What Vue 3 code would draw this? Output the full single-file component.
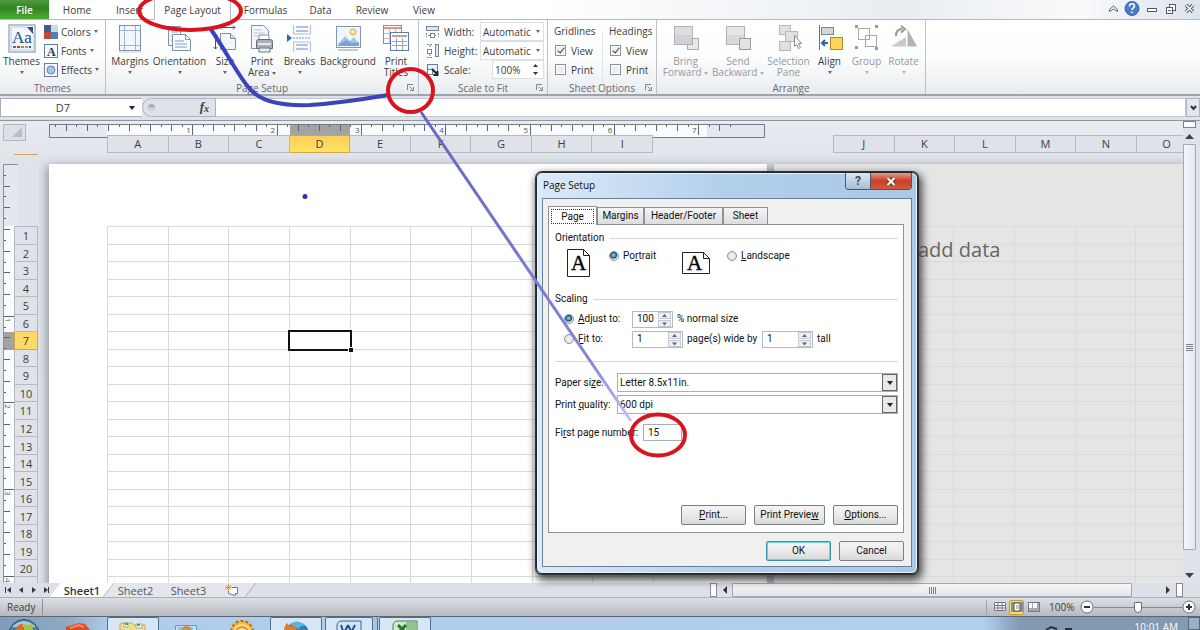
<script setup>
import { ref } from 'vue'

const tabs = ['Home', 'Insert', 'Page Layout', 'Formulas', 'Data', 'Review', 'View']
const pages = [
  { id: 'first', columns: ['A', 'B', 'C', 'D', 'E', 'F', 'G', 'H', 'I'], selected: 'D' },
  { id: 'second', columns: ['J', 'K', 'L', 'M', 'N', 'O', 'P', 'Q', 'R'], selected: '' },
]
const rows = Array.from({ length: 21 }, (_, i) => i + 1)

// Ruler ticks: eighths of an inch, longer on the quarters.
const inch = 84.3
const topTicks = Array.from({ length: 65 }, (_, i) => i - 5).map((n) => ({
  n, x: 59 + (n * inch) / 8, len: n > 0 && n % 8 === 0 ? 10 : n % 2 === 0 ? 6 : 2,
})).filter((t) => t.x > 2 && t.x < 714)
const vInch = 86.7
const sideTicks = Array.from({ length: 40 }, (_, i) => i - 5).map((n) => ({
  n, y: 65 + (n * vInch) / 8, len: n > 0 && n % 8 === 0 ? 10 : n % 2 === 0 ? 6 : 2,
}))

const adjust = ref('100')
const wide = ref('1')
const tall = ref('1')
const firstPage = ref('15')
</script>

<template>
  <div class="window">
    <nav class="tabs" aria-label="Ribbon tabs">
      <button class="file">File</button>
      <button v-for="t in tabs" :key="t" :class="{ active: t === 'Page Layout' }">{{ t }}</button>
      <div class="win-tools">
        <svg width="86" height="16" viewBox="0 0 86 16" fill="none" stroke="#555b66">
          <path d="M1.500 9.500 5.500 6l4 3.500v2l-4-2.500-4 2.500z" stroke-width="1" fill="#fff" />
          <circle cx="24" cy="8.500" r="7" fill="#4a7cc8" stroke="#3a64a8" />
          <path d="M21.500 6.500c0-3.500 5-3.500 5-.5 0 2-2.500 1.700-2.500 4M24 11.500v1.500" stroke="#fff" stroke-width="1.600" />
          <rect x="39.500" y="8.500" width="9" height="3" fill="#fff" />
          <rect x="61.500" y="4.500" width="6" height="6" fill="#fff" />
          <rect x="58.500" y="7.500" width="6" height="6" fill="#fff" />
          <path d="M60 10.500h3" />
          <path d="m78 5 7 7m0-7-7 7" stroke-width="3.500" /><path d="m78 5 7 7m0-7-7 7" stroke="#fff" stroke-width="1.500" />
        </svg>
      </div>
    </nav>

    <section class="ribbon">
      <div class="group themes">
        <div class="body">
          <button class="big">
            <svg width="28" height="30" viewBox="0 0 28 30">
              <rect x="1" y="1" width="26" height="27" fill="#fff" stroke="#6d89ac" /><path d="M3 3h17l6 6v17H3z" fill="#f2f7fc" stroke="#b6c8de" />
              <path d="M19 3h6v7z" fill="#2c4f85" />
              <text x="4" y="19" font-family="Liberation Serif" font-size="17" fill="#1f4e79">Aa</text>
              <path d="M5 23h3" stroke="#3b6fb6" stroke-width="2" /><path d="M9 23h3" stroke="#c0392b" stroke-width="2" /><path d="M13 23h3" stroke="#7aa536" stroke-width="2" /><path d="M17 23h3" stroke="#e08a2b" stroke-width="2" /><path d="M21 23h2" stroke="#30599c" stroke-width="2" />
            </svg>
            <span>Themes</span><i class="caret"></i>
          </button>
          <div class="small-col">
            <button><svg width="14" height="14"><rect width="7" height="7" fill="#405f8d" /><rect x="7" width="7" height="7" fill="#c9dbe8" /><rect y="7" width="7" height="7" fill="#b94a43" /><rect x="7" y="7" width="7" height="7" fill="#4c80b7" /></svg>Colors<i class="caret"></i></button>
            <button><svg width="14" height="14"><rect x=".5" y=".5" width="13" height="13" fill="#f4f8fc" stroke="#6d7f98" /><text x="3" y="12" font-family="Liberation Serif" font-size="12" font-weight="bold" fill="#223a5e">A</text></svg>Fonts<i class="caret"></i></button>
            <button><svg width="14" height="14"><rect x=".5" y=".5" width="13" height="13" fill="#f4f8fc" stroke="#6d7f98" /><circle cx="7" cy="7" r="4" fill="#a9c4ec" stroke="#5e83bd" /></svg>Effects<i class="caret"></i></button>
          </div>
        </div>
        <h2>Themes</h2>
      </div>

      <div class="group setup">
        <div class="body">
          <button class="big">
            <svg width="28" height="30"><rect x="3.500" y="1.500" width="21" height="25" fill="#f3f7fb" stroke="#7c91ab" /><path d="M8.500 2v24M19.500 2v24M4 6.500h20M4 21.500h20" stroke="#9fb6d2" /><path d="M3 28h23" stroke="#ccd3dc" /></svg>
            <span>Margins</span><i class="caret"></i>
          </button>
          <button class="big">
            <svg width="28" height="30"><path d="M2.500 2.500h12v19h-12z" fill="#f3f7fb" stroke="#7c91ab" /><path d="M5 8h7M5 12h7M5 16h5" stroke="#8fa9ca" /><path d="M6.500 10.500h13l5 5v11h-18z" fill="#fbfdff" stroke="#7c91ab" /><path d="M19.500 10.500v5h5M9 17h9M9 20h12M9 23h12" fill="none" stroke="#7d9cc5" /></svg>
            <span>Orientation</span><i class="caret"></i>
          </button>
          <button class="big">
            <svg width="28" height="30"><path d="M9.500 9.500h10l5 5v11h-15z" fill="#f3f7fb" stroke="#7c91ab" /><path d="M19.500 9.500v5h5" fill="#c9daee" stroke="#7c91ab" /><path d="M9 3.500h15M11 1.500l-2 2 2 2M22 1.500l2 2-2 2M4.500 10v15M2.500 12l2-2 2 2M2.500 23l2 2 2-2" fill="none" stroke="#315c99" /></svg>
            <span>Size</span><i class="caret"></i>
          </button>
          <button class="big">
            <svg width="28" height="30"><path d="M3.500 1.500h12l5 5v18h-17z" fill="#f3f7fb" stroke="#7c91ab" /><path d="M6 6h8M6 9h11M6 12h5" stroke="#b6c7dc" /><path d="M11 11h10v7H11z" fill="#fff" stroke="#8a929c" /><path d="M8.500 17.500q0-2 2-2h12q2 0 2 2v7h-16z" fill="#a8afb7" stroke="#646b75" /><path d="M10 20h13" stroke="#e8ebee" stroke-width="2" /><path d="M11 24h11v4H11z" fill="#e6eefb" stroke="#6d7785" /></svg>
            <span>Print<br>Area <i class="caret"></i></span>
          </button>
          <button class="big">
            <svg width="28" height="30"><path d="M7.500 1v9h17V1M7.500 28v-10h17v10" fill="#f6f9fd" stroke="#b4bfcc" /><path d="M10 3h12M10 7h12M10 21h12M10 25h12" stroke="#6f8db6" /><path d="M7 14h18" stroke="#7a8aa0" stroke-dasharray="2 1" /><path d="m1 10 5 4-5 4z" fill="#2f66b0" /></svg>
            <span>Breaks</span><i class="caret"></i>
          </button>
          <button class="big">
            <svg width="28" height="30"><rect x="2.500" y="2.500" width="24" height="21" fill="#f1f6fc" stroke="#8196b2" /><circle cx="19" cy="8" r="3" fill="#fde6aa" stroke="#e0a54a" /><path d="m4 20 7-8 5 5 4-4 5 7v2H4z" fill="#a5c3e8" /><path d="m4 21 8-5 6 3 7-1v4H4z" fill="#7ba2d8" /><path d="M4 26h20" stroke="#c3cad3" stroke-width="2" /></svg>
            <span>Background</span>
          </button>
          <button class="big">
            <svg width="28" height="30"><rect x="1.500" y="1.500" width="18" height="18" fill="#f6f9fd" stroke="#7c91ab" /><path d="M2 4h17" stroke="#e1987e" stroke-width="2" /><path d="M2 9.500h17M2 14.500h17M7.500 5v14M13.500 5v14" stroke="#b4c3d8" /><rect x="8.500" y="8.500" width="18" height="18" fill="#fff" stroke="#5e7ba5" /><path d="M10 12h15" stroke="#e1987e" stroke-width="2" /><path d="M10 17.500h15M10 21.500h15M14.500 14v12M20.500 14v12" stroke="#8fa9cc" /></svg>
            <span>Print<br>Titles</span>
          </button>
        </div>
        <h2>Page Setup</h2>
        <button class="launch" aria-label="Page Setup options"><svg width="7" height="7" fill="none" stroke="#7d838c"><path d="M.5 6V.5H6M2.500 2.500l3 3M6.500 3v3.500H3" /></svg></button>
      </div>

      <div class="group scale">
        <div class="body fields">
          <label for="w"><svg width="14" height="14" fill="none" stroke="#7a8798"><rect x=".5" y="1.500" width="12" height="4" fill="#dce6f2" /><path d="M.5 8v4M12.500 8v4M2 10.500h9" stroke-dasharray="2 1" /><rect x="4.500" y="8.500" width="4" height="4" fill="#fff" /></svg>Width:</label>
          <span class="sel"><select id="w"><option>Automatic</option></select><i class="caret"></i></span>
          <label for="h"><svg width="14" height="14" fill="none" stroke="#7a8798"><rect x="9.500" y=".5" width="3" height="12" fill="#dce6f2" /><path d="M1 .5h6M1 13.500h6M4 1v3M4 10v3" stroke-dasharray="2 1" /><rect x="1.500" y="5.500" width="4" height="4" fill="#fff" /></svg>Height:</label>
          <span class="sel"><select id="h"><option>Automatic</option></select><i class="caret"></i></span>
          <label for="s"><svg width="14" height="14" fill="none" stroke="#6c7c92"><rect x="1.500" y="1.500" width="10" height="10" fill="#e8eff7" /><rect x="1.500" y="6.500" width="5" height="5" fill="#fff" /><path d="m6 6 5 5M11.500 8v4h-4" stroke="#1e2a3c" stroke-width="2" /></svg>Scale:</label>
          <span class="scale-spin"><input id="s" value="100%"><svg width="7" height="13" fill="#333"><path d="m1 4 2.500-3L6 4zM1 9l2.500 3L6 9z" /></svg></span>
        </div>
        <h2>Scale to Fit</h2>
        <button class="launch" aria-label="Scale options"><svg width="7" height="7" fill="none" stroke="#7d838c"><path d="M.5 6V.5H6M2.500 2.500l3 3M6.500 3v3.500H3" /></svg></button>
      </div>

      <div class="group options">
        <div class="body">
          <fieldset v-for="name in ['Gridlines', 'Headings']" :key="name">
            <legend>{{ name }}</legend>
            <label><input type="checkbox" checked>View</label>
            <label><input type="checkbox">Print</label>
          </fieldset>
        </div>
        <h2>Sheet Options</h2>
        <button class="launch" aria-label="Sheet options"><svg width="7" height="7" fill="none" stroke="#7d838c"><path d="M.5 6V.5H6M2.500 2.500l3 3M6.500 3v3.500H3" /></svg></button>
      </div>

      <div class="group arrange">
        <div class="body">
          <button class="big off">
            <svg width="28" height="30"><rect x="2.500" y="2.500" width="18" height="18" fill="#dedde0" stroke="#b2b2b6" /><path d="M3 11h17v9H3z" fill="#d2d1d5" /><path d="M20.500 14.500h6v11h-11v-5h5z" fill="#e9e9eb" stroke="#a9a9ad" /></svg>
            <span>Bring<br>Forward <i class="caret"></i></span>
          </button>
          <button class="big off">
            <svg width="28" height="30"><rect x="2.500" y="2.500" width="18" height="18" fill="#e6e5e8" stroke="#b2b2b6" /><path d="M3 11h17v9H3z" fill="#d9d8dc" /><rect x="15.500" y="14.500" width="11" height="11" fill="#e3e2e5" stroke="#9b9ba0" /></svg>
            <span>Send<br>Backward <i class="caret"></i></span>
          </button>
          <button class="big off">
            <svg width="28" height="30"><g fill="#e0dfe2" stroke="#b8b8bc"><rect x="4.500" y="1.500" width="11" height="9" /><rect x="4.500" y="17.500" width="11" height="9" /><rect x="10.500" y="7.500" width="12" height="10" /></g><path d="m19.500 11.500 7 8h-3l2 4-2 1-2-4-2 2z" fill="#fff" stroke="#8c8c91" /></svg>
            <span>Selection<br>Pane</span>
          </button>
          <button class="big">
            <svg width="28" height="30"><path d="M3.500 1v25" stroke="#4879b8" /><rect x="5.500" y="3.500" width="12" height="7" fill="#d3d7dc" stroke="#7b8290" /><rect x="14.500" y="13.500" width="12" height="12" fill="#fbd75c" stroke="#b08a2a" /><path d="M12 19H7M9 16l-3 3 3 3" fill="none" stroke="#2f66b0" stroke-width="2" /></svg>
            <span>Align</span><i class="caret"></i>
          </button>
          <button class="big off">
            <svg width="28" height="30"><g fill="none" stroke="#a9a9ad"><rect x="5.500" y="4.500" width="11" height="11" /><rect x="12.500" y="11.500" width="11" height="11" /></g><path d="M2 1h3v3H2zM22 1h3v3h-3zM2 22h3v3H2zM22 23h3v3h-3z" fill="#9a9a9e" /></svg>
            <span>Group</span><i class="caret"></i>
          </button>
          <button class="big off">
            <svg width="28" height="30"><path d="M1 22.500 16 13v9.500z" fill="#c9c9cc" /><path d="M17.500 5 27 22.500h-9.500z" fill="#b3b3b7" /><path d="M6 12Q6 5 12 5M11 2l4 3-4 3.500" fill="none" stroke="#98989c" stroke-width="2" /></svg>
            <span>Rotate</span><i class="caret"></i>
          </button>
        </div>
        <h2>Arrange</h2>
      </div>
    </section>

    <section class="formula">
      <label class="name-box"><input value="D7" aria-label="Name box"><i class="caret dark"></i></label>
      <div class="fx"><svg width="9" height="9"><circle cx="4.500" cy="4.500" r="4" fill="#cfd3d8" /><path d="M1 4.500a3.500 3.500 0 0 1 7 0z" fill="#aab0b8" /></svg><button><em>f</em><sub>x</sub></button></div>
      <input class="formula-input" aria-label="Formula bar">
      <button class="expand" aria-label="Expand formula bar"><svg width="7" height="6" fill="none" stroke="#333" stroke-width="2"><path d="m1 1 2.500 3L6 1" /></svg></button>
    </section>

    <main class="workspace">
      <aside class="side">
        <div class="corner-area"><button class="corner" aria-label="Select all"><svg width="11" height="11"><path d="M10 0v10H0z" fill="#b9bdc3" /></svg></button></div>
        <div class="side-body">
          <svg class="side-ruler" width="15" height="430">
            <rect x="0" y="0" width="15" height="62" fill="#e4e8ee" /><rect y="62" width="11" height="368" fill="#fafbfc" />
            <rect y="168" width="11" height="18" fill="#a3a3a3" />
            <path d="M.5 430V.5h15V62" fill="none" stroke="#8b919b" />
            <g v-for="t in sideTicks" :key="t.n"><path :d="`M1 ${Math.round(t.y)}.5h${t.len}`" stroke="#5c636e" />
              <text v-if="t.len === 10" :transform="`translate(2 ${Math.round(t.y) + 2}) rotate(90)`" font-size="8" fill="#555">{{ t.n / 8 }}</text></g>
          </svg>
          <div class="row-heads"><span v-for="r in rows" :key="r" :class="{ hot: r === 7 }">{{ r < 21 ? r : '' }}</span></div>
        </div>
      </aside>

      <div class="canvas">
        <section v-for="p in pages" :key="p.id" class="page-col" :class="p.id">
          <div class="ruler">
            <svg v-if="p.id === 'first'" width="718" height="14">
              <path d="M.5 0v13.500H58" fill="#e4e8ee" stroke="#737a85" /><rect x="58" width="600" height="13" fill="#fafbfc" /><rect x="658" width="57" height="13" fill="#e4e8ee" />
              <rect x="241" width="60" height="12" fill="#a3a3a3" />
              <path d="M0 .5h715.500v13H604" fill="none" stroke="#737a85" />
              <g v-for="t in topTicks" :key="t.n"><path :d="`M${Math.round(t.x)}.5 1v${t.len}`" stroke="#5c636e" />
                <text v-if="t.len === 10" :x="t.x - 6" y="9" font-size="8" fill="#555">{{ t.n / 8 }}</text></g>
            </svg>
          </div>
          <div class="col-heads"><span v-for="c in p.columns" :key="c" :class="{ hot: c === p.selected }">{{ c }}</span></div>
          <div class="paper">
            <table aria-label="Worksheet">
              <tbody><tr v-for="r in rows" :key="r"><td v-for="c in p.columns" :key="c"><div v-if="r === 7 && c === p.selected" class="cursor"></div></td></tr></tbody>
            </table>
            <p v-if="p.id === 'second'" class="hint">add data</p>
          </div>
        </section>
      </div>

      <div class="vscroll">
        <span class="split"></span>
        <button aria-label="Scroll up"><svg width="9" height="5"><path d="M0 5 4.500 0 9 5z" fill="#3c424c" /></svg></button>
        <span class="thumb"><svg width="7" height="7" stroke="#7b828c"><path d="M0 .5h7M0 2.500h7M0 4.500h7M0 6.500h7" /></svg></span>
        <button class="down" aria-label="Scroll down"><svg width="9" height="5"><path d="M0 0h9L4.500 5z" fill="#3c424c" /></svg></button>
      </div>
    </main>

    <footer class="sheetbar">
      <svg class="nav" width="55" height="14" fill="#333b47"><path d="M5 4h1v6H5zM11 4v6L7 7zM23 4v6l-4-3zM32 4v6l4-3zM44 4v6l4-3zM48 4h1v6h-1z" /></svg>
      <button class="sheet current">Sheet1</button>
      <button class="sheet">Sheet2</button>
      <button class="sheet">Sheet3</button>
      <button class="sheet new" aria-label="Insert sheet"><svg width="14" height="12"><path d="M3.500 3.500h9v6h-2v2l-7-2z" fill="#fff" stroke="#6479a3" /><path d="M3.500 0v7M0 3.500h7M1 1l5 5M6 1 1 6" stroke="#e1a039" /></svg></button>
      <div class="hscroll">
        <span class="knob"></span>
        <button aria-label="Scroll left"><svg width="5" height="8"><path d="M5 0v8L1 4z" fill="#333" /></svg></button>
        <span class="thumb"><svg width="7" height="7" stroke="#7b828c"><path d="M.5 0v7M2.500 0v7M4.500 0v7M6.500 0v7" /></svg></span>
        <button class="right" aria-label="Scroll right"><svg width="5" height="8"><path d="M0 0v8l4-4z" fill="#333" /></svg></button>
        <span class="knob"></span>
      </div>
    </footer>

    <footer class="status">
      <span class="ready">Ready</span>
      <div class="views">
        <button aria-label="Normal"><svg width="12" height="10"><path d="M.5.500h11v8H.5zM.5 3.500h11M.5 6h11M4 .5v8M8 .5v8" fill="#f6f7f8" stroke="#747a84" /></svg></button>
        <button class="on" aria-label="Page Layout view"><svg width="12" height="10"><rect width="12" height="10" fill="#8e9298" /><path d="M3 1h6v8H3z" fill="#fff" stroke="#555" /><path d="M5 4h3M5 6h3" stroke="#888" /></svg></button>
        <button aria-label="Page break"><svg width="12" height="10"><rect x=".5" y=".5" width="11" height="9" fill="#a5a9b0" stroke="#737984" /><path d="M1 1h3v5H1zM5 1h4v5H5z" fill="#fff" /></svg></button>
      </div>
      <span class="percent">100%</span>
      <button class="round" aria-label="Zoom out"><svg width="14" height="14"><circle cx="7" cy="7" r="6" fill="#fff" stroke="#6b717b" /><path d="M4 7h6" stroke="#333" stroke-width="2" /></svg></button>
      <input class="zoom" type="range" min="0" max="100" value="50" aria-label="Zoom">
      <button class="round" aria-label="Zoom in"><svg width="14" height="14"><circle cx="7" cy="7" r="6" fill="#fff" stroke="#6b717b" /><path d="M4 7h6M7 4v6" stroke="#333" stroke-width="2" /></svg></button>
    </footer>

    <footer class="taskbar">
      <button class="task orb" aria-label="Start"><svg width="32" height="13"><circle cx="16" cy="18" r="15.500" fill="#557f9f" stroke="#2f5876" /><path d="M4 10Q16-2 28 10z" fill="#a9cbdf" /><path d="M8 13q1-7 7-6v6z" fill="#df6b32" /><path d="M16 7q4 2 8 0l1 6h-9z" fill="#a6c343" /></svg></button>
      <button class="task" aria-label="Office"><svg width="26" height="13"><path d="m1 10 13-4 6 1 5 6H1z" fill="#dd4b28" /><path d="m5 11 9-3 5 2" stroke="#f28c64" fill="none" stroke-width="2" /></svg></button>
      <button class="task lit" aria-label="Explorer"><svg width="32" height="13"><path d="M3 7q0-2 2-2h10l2 2h11v6H3z" fill="#f2dc8b" stroke="#c9a849" /><path d="M7 5h4v4H7zM19 6h6v4h-6z" fill="#fff" stroke="#9bab9b" /><path d="M8 6h3M20 7h3" stroke="#53a447" stroke-width="2" /></svg></button>
      <button class="task" aria-label="Contacts"><svg width="26" height="13"><path d="M1.500 13V8.500h21V13" fill="#bfe0f3" stroke="#5b9fc9" /><path d="M4 13v-3h15v3" fill="#8fc2e2" /><circle cx="12.500" cy="14" r="5" fill="#d68a4a" /></svg></button>
      <button class="task" aria-label="Messenger"><svg width="28" height="13"><circle cx="14" cy="15" r="11" fill="#f6b73c" stroke="#bb6c14" stroke-width="2" stroke-dasharray="3 2" /><circle cx="14" cy="16" r="9" fill="#ffe59b" /><path d="M8 13q6-6 12 0" stroke="#ec8c28" stroke-width="2" fill="none" /></svg></button>
      <button class="task lit" aria-label="Firefox"><svg width="28" height="13"><circle cx="15" cy="16" r="12" fill="#2c83ba" /><path d="M8 6q7-6 15 2-5-1-6 3z" fill="#57b6dc" /><path d="M2 13q0-6 4-8 0 3 4 3 5 0 5 3l-4 2z" fill="#e6792a" /></svg></button>
      <button class="task lit double" aria-label="Word"><svg width="28" height="13"><path d="M2 13V8q0-5 5-5h19v10z" fill="#d3e4f5" stroke="#3562a4" /><path d="m6 7 2 6M13 7l-3 6M13 7l3 6M20 7l-3 6" stroke="#204f9c" stroke-width="2" /></svg></button>
      <button class="task lit" aria-label="Excel"><svg width="28" height="13"><path d="M2 13V8q0-5 5-5h19v10z" fill="#d2e9d0" stroke="#468348" /><path d="M15 13V4h10v9z" fill="#8fc48c" /><path d="m7 7 7 7M15 7l-7 7" stroke="#27772e" stroke-width="3" /></svg></button>
      <div class="tray"><svg width="30" height="5" stroke="#26323e"><path d="m1 5 5-3 6 2M20 4h7" fill="none" stroke-width="2" /></svg><time>10:01 AM</time><span class="peek"></span></div>
    </footer>

    <section class="dialog" role="dialog" aria-label="Page Setup">
      <header><h1>Page Setup</h1><div class="caption"><button aria-label="Help">?</button><button class="close" aria-label="Close"><svg width="10" height="9"><path d="m1.500 1 7 7m0-7-7 7" stroke="#7c3a35" stroke-width="4" /><path d="m1.500 1 7 7m0-7-7 7" stroke="#fff" stroke-width="2" /></svg></button></div></header>
      <div class="client">
        <div class="dtabs"><button class="current"><span>Page</span></button><button>Margins</button><button class="hf">Header/Footer</button><button>Sheet</button></div>
        <div class="panel">
          <h3>Orientation</h3>
          <div class="orient">
            <svg class="portrait" width="23" height="28"><path d="M.5.500h16l6 6v21H.5z" fill="#fff" stroke="#222" /><path d="M16.500.5v6h6" fill="none" stroke="#222" /><text x="4" y="21" font-size="21" font-family="Liberation Serif" stroke="#000" stroke-width=".4">A</text></svg>
            <label class="p-label"><input type="radio" name="orientation" checked><span>Po<u>r</u>trait</span></label>
            <svg class="land" width="28" height="22"><path d="M.5.500h21l6 6v15H.5z" fill="#fff" stroke="#222" /><path d="M21.500.5v6h6" fill="none" stroke="#222" /><text x="5" y="18" font-size="21" font-family="Liberation Serif" stroke="#000" stroke-width=".4">A</text></svg>
            <label><input type="radio" name="orientation"><span><u>L</u>andscape</span></label>
          </div>
          <h3 class="scaling">Scaling</h3>
          <div class="line">
            <label class="choice"><input type="radio" name="fit" checked><span><u>A</u>djust to:</span></label>
            <span class="spin short"><input v-model="adjust" aria-label="Percent"><svg width="14" height="15"><rect x=".5" y=".5" width="12" height="6" fill="#eef0f4" stroke="#c3c7cf" /><rect x=".5" y="8.500" width="12" height="6" fill="#eef0f4" stroke="#c3c7cf" /><path d="m4 5 2.500-3L9 5zM4 10.500l2.500 3 2.500-3z" fill="#55698f" /></svg></span><span>% normal size</span>
          </div>
          <div class="line">
            <label class="choice"><input type="radio" name="fit"><span><u>F</u>it to:</span></label>
            <span class="spin"><input v-model="wide" aria-label="Pages wide"><svg width="14" height="15"><rect x=".5" y=".5" width="12" height="6" fill="#eef0f4" stroke="#c3c7cf" /><rect x=".5" y="8.500" width="12" height="6" fill="#eef0f4" stroke="#c3c7cf" /><path d="m4 5 2.500-3L9 5zM4 10.500l2.500 3 2.500-3z" fill="#55698f" /></svg></span><span class="by">page(s) wide by</span>
            <span class="spin"><input v-model="tall" aria-label="Pages tall"><svg width="14" height="15"><rect x=".5" y=".5" width="12" height="6" fill="#eef0f4" stroke="#c3c7cf" /><rect x=".5" y="8.500" width="12" height="6" fill="#eef0f4" stroke="#c3c7cf" /><path d="m4 5 2.500-3L9 5zM4 10.500l2.500 3 2.500-3z" fill="#55698f" /></svg></span><span>tall</span>
          </div>
          <hr>
          <div class="combo"><label for="paper">Paper si<u>z</u>e:</label><span class="dsel"><select id="paper"><option>Letter 8.5x11in.</option></select><b><i class="caret dark"></i></b></span></div>
          <div class="combo"><label for="quality">Print <u>q</u>uality:</label><span class="dsel"><select id="quality"><option>600 dpi</option></select><b><i class="caret dark"></i></b></span></div>
          <div class="combo first-page"><label for="fp">Fi<u>r</u>st page number:</label><input id="fp" v-model="firstPage"></div>
          <div class="actions"><button><u>P</u>rint...</button><button class="mid">Print Previe<u>w</u></button><button><u>O</u>ptions...</button></div>
        </div>
        <div class="confirm"><button class="ok">OK</button><button>Cancel</button></div>
      </div>
    </section>

    <svg class="marks" width="1200" height="630" fill="none">
      <defs><linearGradient id="fade" gradientUnits="userSpaceOnUse" x1="421" y1="112" x2="631" y2="421"><stop stop-color="#6565c4" /><stop offset=".8" stop-color="#8585d8" /><stop offset="1" stop-color="#c3c3ee" /></linearGradient></defs>
      <path d="m421 112 210 309" stroke="url(#fade)" stroke-width="3" />
      <path d="M210 28C228 54 238 76 250 89C262 103 285 106 310 105C340 103 365 99 388 95" stroke="#3c44bd" stroke-width="4" />
      <g stroke="#d9141f" stroke-width="4"><ellipse cx="190" cy="11" rx="51" ry="19" /><ellipse cx="410.500" cy="90.500" rx="22.500" ry="21.500" /><ellipse cx="658" cy="435" rx="27" ry="20.500" /></g>
      <circle cx="305" cy="196.500" r="2.500" fill="#2832b4" />
    </svg>
  </div>
</template>

<style>
body { margin: 0; overflow: hidden; }
</style>

<style scoped>
* { box-sizing: border-box; }
button, input, select { font: inherit; color: inherit; margin: 0; padding: 0; border: 0; background: none; border-radius: 0; }
h1, h2, h3, p { margin: 0; font: inherit; }
svg { display: block; flex: none; }
select { appearance: none; }
.window { position: relative; display: flex; flex-direction: column; height: 100vh; overflow: hidden; background: #e5e9ef; font: 10px/12px "Open Sans", "Noto Sans", sans-serif; color: #3d3d3d; }
.caret { display: inline-block; width: 0; height: 0; border: 2px solid transparent; border-top: 3px solid #666; border-bottom: 0; vertical-align: middle; }
.caret.dark { border-width: 4px 3px 0; border-top-color: #222; }

.tabs { display: grid; grid-template-columns: 49px 56px 49px 77px 69px 41px 62px 42px 1fr; height: 20px; flex: none; background: linear-gradient(90deg, #fff 0 45%, #e9edf2 75%, #f9fafb 90%, #dce4ed); border-bottom: 1px solid #b5bac2; }
.tabs button { height: 19px; white-space: nowrap; }
.tabs .file { background: linear-gradient(#4e9a3c, #2f8424 45%, #4fae33); color: #fff; font-weight: 600; }
.tabs .active { height: 20px; background: #fff; border: 1px solid #b5bac2; border-width: 0 1px; }
.win-tools { justify-self: end; width: 92px; }

.ribbon { display: flex; height: 76px; flex: none; background: linear-gradient(#fff, #fcfdfd 50%, #e9ecef); border-bottom: 2px solid #a0a5ad; }
.group { position: relative; display: flex; flex-direction: column; border-right: 1px solid #bcc1c9; }
.group h2 { text-align: center; height: 12px; color: #636b78; }
.body { display: flex; flex: 1; min-height: 0; }
.big { display: flex; flex-direction: column; align-items: center; padding-top: 4px; justify-content: flex-start; white-space: nowrap; height: 60px; }
.big > span { margin-top: 2px; line-height: 11px; text-align: center; }
.big > .caret { margin-top: 4px; }
.off { color: #98999d; }
.off .caret { border-top-color: #b2b2b6; }
.themes { width: 106px; }
.themes .big { width: 43px; }
.small-col { display: flex; flex-direction: column; padding: 2px 0 0 1px; }
.small-col button { display: flex; align-items: center; gap: 3px; height: 19px; }
.setup { width: 313px; }
.setup .body { display: grid; grid-template-columns: 46px 53px 38px 36px 39px 58px 38px; padding-left: 1px; }
.launch { position: absolute; right: 4px; bottom: 3px; }
.scale { width: 129px; }
.scale .fields { display: grid; grid-template-columns: 54px 64px; grid-auto-rows: 19px; padding: 2px 0 0 7px; }
.fields label { display: flex; align-items: center; gap: 4px; white-space: nowrap; }
.sel { position: relative; display: flex; border: 1px solid #dcdfe3; background: #fff; }
.sel select { width: 100%; padding-left: 2px; }
.sel .caret { position: absolute; right: 3px; top: 7px; }
.scale-spin { display: flex; align-items: center; justify-content: space-between; margin-left: 12px; padding: 0 4px 0 2px; border: 1px solid #dcdfe3; background: #fff; }
.scale-spin input { width: 34px; }
.options { width: 109px; }
.options .body { padding-top: 2px; }
.options fieldset { border: 0; margin: 0; padding: 0 0 0 6px; width: 54px; min-width: 0; }
.options fieldset + fieldset { border-left: 1px solid #e0e3e7; }
.options legend { padding: 0; height: 19px; line-height: 19px; }
.options label { display: flex; align-items: center; gap: 5px; height: 19px; padding-left: 1px; }
.options input { appearance: none; width: 11px; height: 11px; border: 1px solid #8c9098; background: #edeff1; box-shadow: inset 0 0 0 1px #fff; }
.options input:checked::after { content: ""; display: block; width: 3px; height: 6px; margin: 0 0 0 3px; border: solid #444; border-width: 0 1px 1px 0; transform: rotate(40deg); }
.arrange { width: 269px; }
.arrange .body { display: grid; grid-template-columns: 51px 54px 47px 35px 39px 35px; padding-left: 3px; }

.formula { display: flex; height: 25px; flex: none; padding: 2px 0 3px; border-bottom: 1px solid #9096a1; background: #dfe3e9; }
.name-box { display: flex; align-items: center; width: 142px; background: #fff; border: 1px solid #a9afb8; border-right: 0; padding-right: 7px; }
.name-box input { flex: 1; min-width: 0; text-align: center; padding-right: 4px; font-size: 11px; }
.fx { display: flex; align-items: center; justify-content: space-between; width: 74px; padding: 0 6px 0 4px; border: 1px solid #aeb4bd; border-radius: 10px 0 0 10px; }
.fx button { font: bold italic 13px/14px "Liberation Serif", serif; }
.fx sub { font-size: 10px; vertical-align: -1px; }
.formula-input { flex: 1; min-width: 0; background: #fff; border: 1px solid #c3c8cf; border-left: 0; }
.expand { width: 14px; display: grid; place-items: center; border: 1px solid #aeb4bd; background: #e3e6eb; }

.workspace { display: flex; flex: 1; min-height: 0; overflow: hidden; background: linear-gradient(#e8ecf1, #dee3e9 45px, #e2e6ec); }
.side { display: flex; flex-direction: column; width: 38px; flex: none; }
.corner-area { height: 43px; flex: none; padding: 3px 0 0 3px; }
.corner { display: flex; width: 23px; height: 17px; justify-content: flex-end; padding: 2px; border: 1px solid #b4b9c1; background: #dde1e7; }
.side-body { display: flex; flex: 1; min-height: 0; padding-left: 3px; position: relative; }
.side-body::before { content: ""; position: absolute; left: 14px; right: 0; top: -10px; height: 1px; background: #d9a45c; }
.side-ruler { margin-right: -4px; }
.row-heads { display: grid; grid-template-rows: repeat(21, 1fr); height: 369px; margin-top: 62px; width: 24px; flex: none; font-size: 11px; border-top: 1px solid #b4b9c2; position: relative; }
.row-heads span { display: grid; place-items: center; padding-top: 2px; background: #dfe2e8; border: 1px solid #b4b9c2; border-top: 0; }
.row-heads .hot { background: #ffd965; border-color: #d9a53c; }
.canvas { display: flex; flex: 1; min-width: 0; gap: 7px; padding: 3px 0 0 11px; overflow: hidden; }
.page-col { width: 718px; flex: none; display: flex; flex-direction: column; }
.ruler { height: 11px; flex: none; }
.col-heads { position: relative; display: grid; grid-template-columns: repeat(9, 1fr); width: 546px; height: 18px; flex: none; margin: 0 0 11px 58px; font-size: 11px; border-left: 1px solid #b4b9c2; }
.second .col-heads { margin-left: 59px; }
.col-heads span { display: grid; place-items: center; background: #dfe2e8; border: 1px solid #b4b9c2; border-left: 0; }
.col-heads .hot { background: linear-gradient(#ffce58, #ffe36b); border-color: #d9a53c; }
.paper { position: relative; flex: 1; min-height: 0; padding: 62px 0 0 58px; background: #fff; box-shadow: 0 4px 9px 2px #8d9198; }
.second .paper { background: #e5e5e5; }
table { border-collapse: collapse; table-layout: fixed; width: 547px; height: 369px; }
td { padding: 0; border: 1px solid #d9d9d9; position: relative; }
.second td { border-color: #dadadc; }
.cursor { position: absolute; inset: -2px; border: 2px solid #111; }
.cursor::after { content: ""; position: absolute; right: -3px; bottom: -3px; width: 4px; height: 4px; background: #111; outline: 1px solid #fff; }
.hint { position: absolute; left: 144px; top: 72px; font-size: 20px; line-height: 28px; color: #666; }
.vscroll { display: flex; flex-direction: column; align-items: center; width: 17px; flex: none; padding: 0 4px 0 0; background: #dfe3e9; }
.split { width: 13px; height: 7px; border: 1px solid #7c828c; background: #fff; flex: none; }
.vscroll button { height: 16px; display: grid; place-items: center; flex: none; }
.vscroll .thumb { flex: 1; width: 13px; margin-bottom: 17px; background: linear-gradient(90deg, #f4f6f9, #e4e8ee); }
.thumb { display: grid; place-items: center; border: 1px solid #a3a9b3; border-radius: 1px; }

.sheetbar { display: flex; height: 15px; flex: none; background: #dce1e8; border-bottom: 1px solid #a9afb8; }
.sheet { position: relative; width: 53px; font-size: 11px; line-height: 13px; color: #555; isolation: isolate; }
.sheet::before { content: ""; position: absolute; inset: 0 -2px 0 0; transform: skewX(-38deg); border: solid #a3a9b3; border-width: 0 1px 0 0; background: #e3e7ec; z-index: -1; }
.sheet.current { width: 54px; color: #333; font-weight: 600; }
.sheet.current::before { background: #fff; inset: 0 0 0 6px; box-shadow: -6px 0 #fff; }
.sheet.new { width: 34px; display: grid; place-items: center; }
.hscroll { display: flex; margin-left: auto; width: 490px; padding-right: 17px; }
.hscroll button { width: 15px; display: grid; place-items: center; }
.hscroll .thumb { flex: 1; background: linear-gradient(#f6f8fa, #e2e6ec); }
.hscroll .right { margin-left: 29px; }
.knob { width: 7px; border: 1px solid #858b95; background: #fff; }

.status { display: flex; align-items: center; height: 19px; flex: none; padding: 0 4px 0 7px; background: linear-gradient(#dcdfe3, #b6bac0); border-bottom: 1px solid #5a6672; }
.ready { width: 36px; height: 16px; line-height: 16px; border-right: 1px solid #8c929b; }
.views { display: flex; margin-left: auto; align-items: center; padding-left: 5px; gap: 2px; border-left: 1px solid #a0a5ad; }
.views button { width: 15px; height: 15px; display: grid; place-items: center; }
.views .on { background: #fbdc74; border: 1px solid #c99a34; border-radius: 2px; }
.percent { width: 31px; margin-left: 8px; }
.zoom { appearance: none; width: 88px; height: 12px; background: linear-gradient(#858b94, #858b94) center / 100% 1px no-repeat; }
.zoom::-webkit-slider-thumb { appearance: none; width: 8px; height: 11px; border: 1px solid #666c76; background: #fff; border-radius: 1px 1px 4px 4px; }

.taskbar { display: flex; height: 13px; flex: none; overflow: hidden; background: linear-gradient(90deg, #7f9cb8, #8faac5 70px, #afcdea 110px, #b1d0ee 82%, #8299b2 85%, #8299b2); }
.task { height: 13px; width: 52px; display: flex; justify-content: center; flex: none; }
.task.orb { width: 48px; }
.task.orb + .task { width: 59px; }
.task.lit { background: #d7e6f5; border: 1px solid #4f708f; border-bottom: 0; border-radius: 2px 2px 0 0; }
.task:nth-child(4) { width: 55px; }
.task:nth-child(5) { width: 56px; }
.task:nth-child(6) { margin-right: 3px; }
.task.double { width: 48px; margin-right: 6px; box-shadow: 4px 0 #a8c4df, 5px 0 #4f708f; }
.tray { margin-left: auto; display: flex; align-items: flex-end; gap: 60px; color: #fff; }
.tray time { align-self: flex-start; padding-top: 4px; white-space: nowrap; }
.peek { width: 12px; height: 13px; margin-left: -50px; border: 1px solid #536a82; background: #9cb0c4; }

.dialog { position: absolute; left: 536px; top: 172px; width: 382px; padding: 0 5px 6px; border: 1px solid #1e2730; border-radius: 6px; background: linear-gradient(90deg, #dceaf7, #b2cfeb 50%, #a9c9e8); box-shadow: inset 0 0 0 1px #e9f3fb, 0 0 0 1px #333, 2px 4px 9px 2px #444; font-family: Roboto, "Noto Sans", sans-serif; font-size: 10px; color: #111; }
.dialog header { display: flex; height: 25px; justify-content: space-between; padding-left: 1px; }
.dialog h1 { font: 10px/24px "Open Sans", sans-serif; }
.caption { display: flex; height: 17px; border: 1px solid #44576b; border-top: 0; border-radius: 0 0 4px 4px; overflow: hidden; }
.caption button { width: 24px; font-weight: bold; font-size: 12px; line-height: 15px; color: #3c4b5d; background: linear-gradient(#dce7f3, #a8bdd3); }
.caption .close { width: 41px; display: grid; place-items: center; background: linear-gradient(#e79a8b, #c73f25 50%, #d65a3d); border-left: 1px solid #44576b; }
.client { background: #f0f0f0; border: 1px solid #67809a; padding: 7px 7px 5px 5px; }
.dtabs { display: flex; align-items: flex-end; height: 18px; }
.dtabs button { height: 17px; width: 47px; border: 1px solid #8e9197; border-bottom: 0; background: linear-gradient(#f4f4f4, #dcdcdc); white-space: nowrap; }
.dtabs .hf { width: 79px; }
.dtabs .current { height: 19px; width: 49px; padding: 2px; margin-bottom: -1px; background: #fff; z-index: 1; }
.dtabs .current span { display: block; border: 1px dotted #333; line-height: 13px; }
.dtabs button:last-child { width: 45px; }
.panel { background: #fff; border: 1px solid #8e9197; padding: 6px 5px 7px 6px; }
h3 { display: flex; align-items: center; gap: 6px; height: 14px; }
h3::after { content: ""; flex: 1; height: 1px; background: #d4d7dc; }
.orient { display: flex; align-items: flex-start; height: 35px; padding: 4px 0 0 12px; }
.orient label { display: flex; align-items: center; gap: 4px; height: 14px; }
.portrait { margin-right: 19px; }
.p-label { width: 73px; }
.land { margin: 3px 17px 0 0; }
.scaling { margin-top: 12px; margin-bottom: 3px; }
.dialog input[type="radio"] { appearance: none; width: 10px; height: 10px; flex: none; border: 1px solid #8a8f96; border-radius: 50%; background: radial-gradient(#f4f4f4, #d9dcdf); }
.dialog input[type="radio"]:checked { background: radial-gradient(circle at 45% 40%, #6fc1e4 0 1px, #16466b 3px, #e8eef3 4px); }
.line { display: flex; align-items: center; height: 20px; padding-left: 9px; white-space: nowrap; gap: 4px; }
.choice { display: flex; align-items: center; gap: 4px; width: 64px; }
.spin { display: flex; align-items: center; width: 51px; height: 17px; padding-left: 4px; border: 1px solid #b5b9c0; background: #fff; }
.spin.short { width: 41px; }
.spin input { flex: 1; min-width: 0; width: 10px; }
.by { width: 71px; }
.dialog hr { border: 0; height: 1px; background: #d4d7dc; margin: 12px 0 11px; }
.combo { display: flex; align-items: center; height: 19px; margin-bottom: 3px; white-space: nowrap; }
.combo label { width: 62px; flex: none; }
.dsel { position: relative; flex: 1; height: 19px; border: 1px solid #a9adb4; }
.dsel select { width: 100%; height: 17px; padding-left: 2px; }
.dsel b { position: absolute; right: 0; top: 0; width: 15px; height: 17px; display: grid; place-items: center; border: 1px solid #666; background: #e9e9e9; pointer-events: none; }
.first-page { margin-top: 9px; }
.first-page label { width: 88px; }
.first-page input { width: 39px; height: 17px; padding-left: 4px; border: 1px solid #a9adb4; }
.actions, .confirm { display: flex; justify-content: flex-end; gap: 8px; }
.actions { margin-top: 63px; }
.confirm { padding-top: 8px; }
.actions button, .confirm button { width: 65px; height: 20px; border: 1px solid #7c7f84; border-radius: 2px; background: linear-gradient(#f4f4f4, #ebebeb 50%, #d8d8d8); white-space: nowrap; }
.actions .mid { width: 71px; }
.confirm .ok { border-color: #3c8fae; box-shadow: inset 0 0 0 1px #6cd0ef; }
.marks { position: absolute; left: 0; top: 0; pointer-events: none; }
</style>
